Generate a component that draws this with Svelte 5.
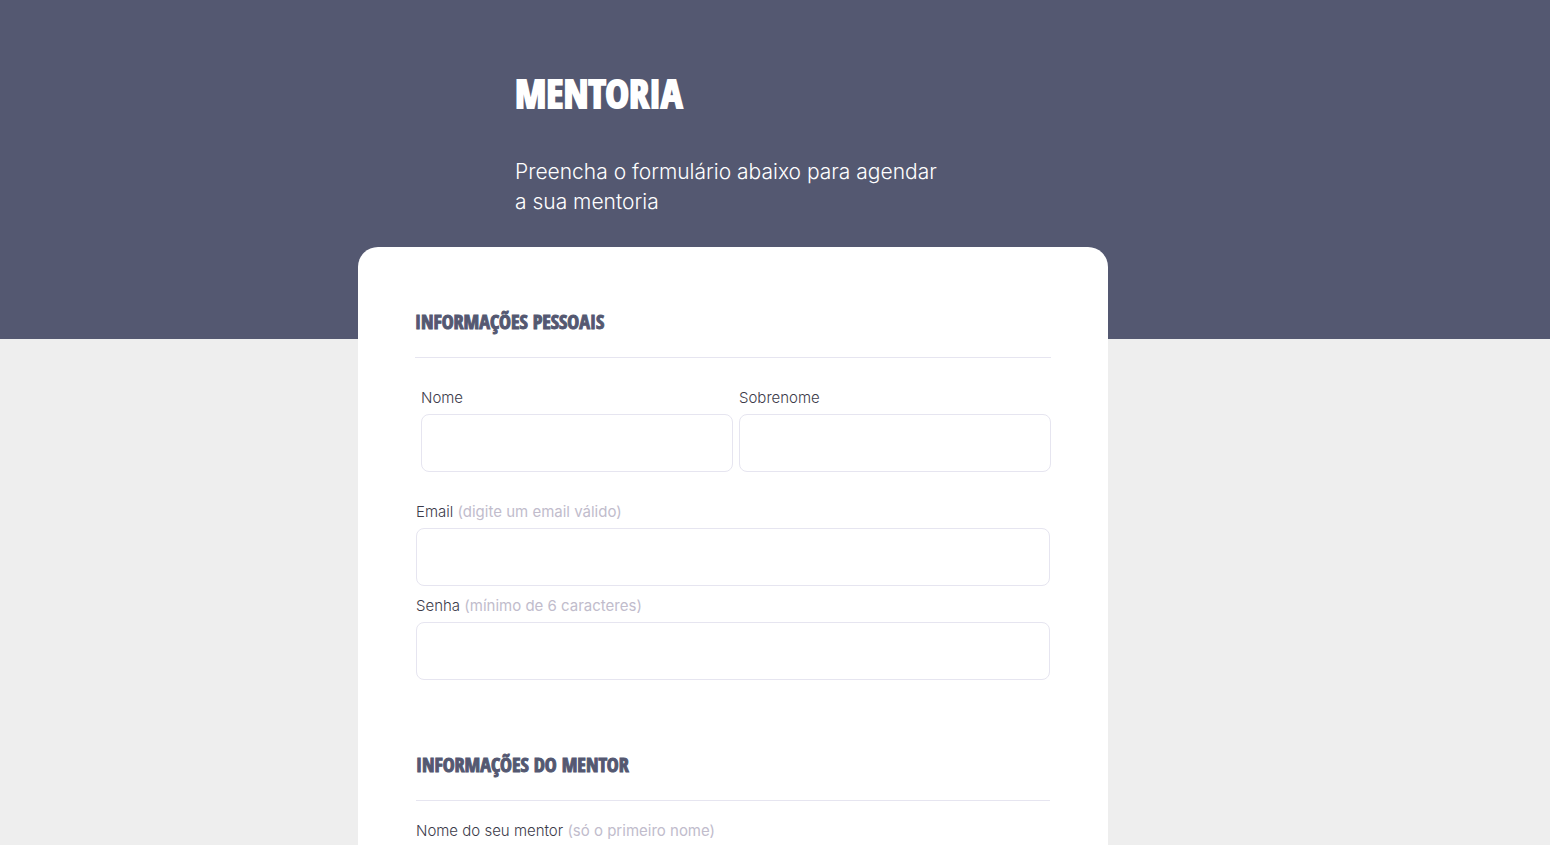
<script>
  let firstName = $state('');
  let lastName = $state('');
  let email = $state('');
  let password = $state('');
  let mentor = $state('');
</script>

<div class="page">
  <header>
    <div class="intro">
      <h1>MENTORIA</h1>
      <p>Preencha o formulário abaixo para agendar a sua mentoria</p>
    </div>
  </header>

  <main>
    <form class="card">
      <section>
        <h2>INFORMAÇÕES PESSOAIS</h2>
        <div class="names">
          <div class="field">
            <label for="first-name">Nome</label>
            <input id="first-name" type="text" bind:value={firstName} />
          </div>
          <div class="field">
            <label for="last-name">Sobrenome</label>
            <input id="last-name" type="text" bind:value={lastName} />
          </div>
        </div>
        <div class="stack">
          <div class="field">
            <label for="email">Email <span>(digite um email válido)</span></label>
            <input id="email" type="email" bind:value={email} />
          </div>
          <div class="field">
            <label for="password">Senha <span>(mínimo de 6 caracteres)</span></label>
            <input id="password" type="password" bind:value={password} />
          </div>
        </div>
      </section>

      <section class="stack">
        <h2>INFORMAÇÕES DO MENTOR</h2>
        <div class="field">
          <label for="mentor">Nome do seu mentor <span>(só o primeiro nome)</span></label>
          <input id="mentor" type="text" bind:value={mentor} />
        </div>
      </section>
    </form>
  </main>
</div>

<style>
  :global(body) {
    margin: 0;
    background: #eeeeee;
  }

  .page {
    height: 100vh;
    overflow: hidden auto;
    scrollbar-width: none;
    font-family: Inter, sans-serif;
    font-weight: 300;
  }

  header,
  main {
    box-sizing: border-box;
    padding-right: 84px;
  }

  header {
    min-height: 339px;
    padding-top: 63px;
    background: #545871;
    color: #ffffff;
  }

  .intro {
    max-width: 436px;
    margin: 0 auto;
  }

  h1,
  h2 {
    margin: 0;
    font-family: "Open Sans Condensed", "Roboto Condensed", "Open Sans", sans-serif;
    font-weight: 800;
    -webkit-text-stroke: 1px currentColor;
  }

  h1 {
    font-size: 40px;
    line-height: 60px;
    -webkit-text-stroke-width: 2px;
  }

  p {
    margin: 34px 0 0;
    font-size: 21px;
    line-height: 30px;
  }

  .card {
    box-sizing: border-box;
    max-width: 750px;
    margin: -92px auto 0;
    padding: 56px 57px;
    position: relative;
    border-radius: 20px 20px 0 0;
    background: #ffffff;
  }

  section + section {
    margin-top: 66px;
  }

  h2 {
    padding-bottom: 16px;
    border-bottom: 1px solid #e6e5f0;
    color: #545871;
    font-size: 20px;
    line-height: 38px;
  }

  .names {
    display: grid;
    grid-template-columns: 1fr 1fr;
    gap: 6px;
    margin: 28px 0 28px;
    padding-left: 6px;
  }

  .stack {
    padding: 0 1px;
  }

  .field + .field {
    margin-top: 8px;
  }

  .names .field {
    margin: 0;
  }

  section.stack .field {
    margin-top: 18px;
  }

  label {
    display: block;
    color: #3c3b4a;
    font-size: 15px;
    line-height: 24px;
  }

  label span {
    color: #c1bccc;
    font-weight: 400;
  }

  input {
    display: block;
    box-sizing: border-box;
    width: 100%;
    height: 58px;
    margin-top: 4px;
    padding: 0 16px;
    border: 1px solid #e6e5f0;
    border-radius: 8px;
    background: #ffffff;
    color: #3c3b4a;
    font: inherit;
    font-size: 16px;
  }
</style>
